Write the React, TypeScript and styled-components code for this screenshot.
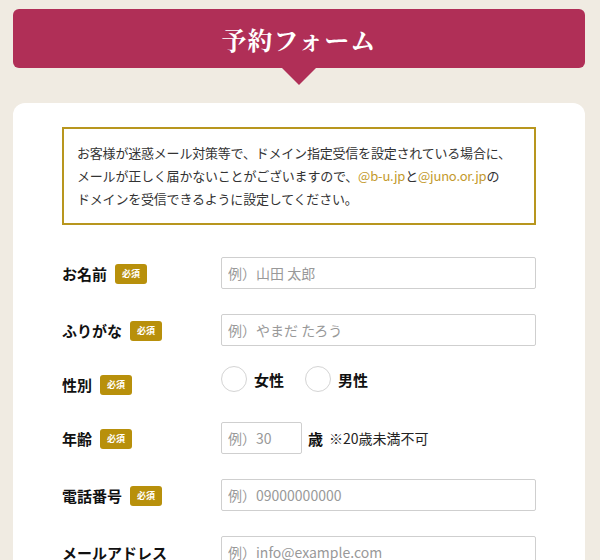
import React from 'react'
import styled, { createGlobalStyle } from 'styled-components'

const GlobalStyle = createGlobalStyle`
	body {
		margin: 0;
		background: #f0ebe2;
		font-family: 'Noto Sans CJK JP', 'Noto Sans', sans-serif;
		color: #222;
	}
`

const Page = styled.div`
	padding: 9px 15px 0 13px;
	width: 600px;
	height: 560px;
	box-sizing: border-box;
	overflow: hidden;
`

const TitleBar = styled.div`
	position: relative;
	height: 59px;
	background: #b02f57;
	border-radius: 6px;
	display: flex;
	align-items: center;
	justify-content: center;
	&::after {
		content: '';
		position: absolute;
		left: 50%;
		bottom: -17px;
		margin-left: -17px;
		border-left: 17px solid transparent;
		border-right: 17px solid transparent;
		border-top: 17px solid #b02f57;
	}
`

const Title = styled.h1`
	margin: 0;
	color: #fff;
	font-family: 'Noto Serif CJK JP', 'Noto Sans CJK JP', serif;
	font-size: 25px;
	font-weight: 700;
	letter-spacing: 1px;
`

const Card = styled.div`
	margin-top: 35px;
	background: #fff;
	border-radius: 12px 12px 0 0;
	padding: 24px 49px 40px;
`

const Notice = styled.div`
	border: 2px solid #b8961e;
	padding: 12px 10px 13px 13px;
	font-size: 13px;
	line-height: 23px;
	color: #333;
	letter-spacing: -0.2px;
	white-space: nowrap;
`

const Domain = styled.span`
	color: #c49a2c;
`

const Form = styled.div`
	margin-top: 32px;
	display: flex;
	flex-direction: column;
	gap: 25px;
`

const Row = styled.div<{ $compact?: boolean }>`
	display: flex;
	align-items: center;
	min-height: ${(p) => (p.$compact ? '26px' : '32px')};
`

const Label = styled.div`
	width: 159px;
	flex-shrink: 0;
	display: flex;
	align-items: center;
	gap: 8px;
	font-size: 15px;
	font-weight: 700;
	color: #111;
`

const Badge = styled.span`
	display: inline-block;
	background: #b8900b;
	color: #fff;
	font-size: 9px;
	font-weight: 700;
	line-height: 20px;
	padding: 0 7px;
	border-radius: 3px;
	margin-top: 2px;
`

const Input = styled.input<{ $w?: number }>`
	box-sizing: border-box;
	width: ${(p) => (p.$w ? `${p.$w}px` : '315px')};
	height: 32px;
	border: 1px solid #cfcfcf;
	border-radius: 2px;
	padding: 0 6px;
	font-family: inherit;
	font-size: 14px;
	color: #333;
	&::placeholder {
		color: #999;
	}
`

const Radios = styled.div`
	display: flex;
	align-items: center;
	align-self: flex-start;
`

const RadioItem = styled.label`
	display: flex;
	align-items: center;
	gap: 7px;
	font-size: 15px;
	font-weight: 700;
	color: #111;
	margin-right: 21px;
	& > span {
		margin-top: -5px;
	}
`

const Circle = styled.span`
	width: 24px;
	height: 24px;
	border: 1px solid #d4d4d4;
	border-radius: 50%;
	background: #fff;
`

const Unit = styled.span`
	margin-left: 6px;
	font-size: 15px;
	font-weight: 700;
	color: #111;
`

const Note = styled.span`
	margin-left: 6px;
	font-size: 14px;
	color: #222;
`

export default function App() {
	return (
		<Page>
			<GlobalStyle />
			<TitleBar>
				<Title>予約フォーム</Title>
			</TitleBar>
			<Card>
				<Notice>
					お客様が迷惑メール対策等で、ドメイン指定受信を設定されている場合に、
					<br />
					メールが正しく届かないことがございますので、<Domain>@b-u.jp</Domain>と
					<Domain>@juno.or.jp</Domain>の
					<br />
					ドメインを受信できるように設定してください。
				</Notice>
				<Form>
					<Row>
						<Label>
							お名前<Badge>必須</Badge>
						</Label>
						<Input placeholder="例）山田 太郎" />
					</Row>
					<Row>
						<Label>
							ふりがな<Badge>必須</Badge>
						</Label>
						<Input placeholder="例）やまだ たろう" />
					</Row>
					<Row $compact>
						<Label>
							性別<Badge>必須</Badge>
						</Label>
						<Radios>
							<RadioItem>
								<Circle />
								<span>女性</span>
							</RadioItem>
							<RadioItem>
								<Circle />
								<span>男性</span>
							</RadioItem>
						</Radios>
					</Row>
					<Row>
						<Label>
							年齢<Badge>必須</Badge>
						</Label>
						<Input $w={81} placeholder="例）30" />
						<Unit>歳</Unit>
						<Note>※20歳未満不可</Note>
					</Row>
					<Row>
						<Label>
							電話番号<Badge>必須</Badge>
						</Label>
						<Input placeholder="例）09000000000" />
					</Row>
					<Row>
						<Label>メールアドレス</Label>
						<Input placeholder="例）info@example.com" />
					</Row>
				</Form>
			</Card>
		</Page>
	)
}
